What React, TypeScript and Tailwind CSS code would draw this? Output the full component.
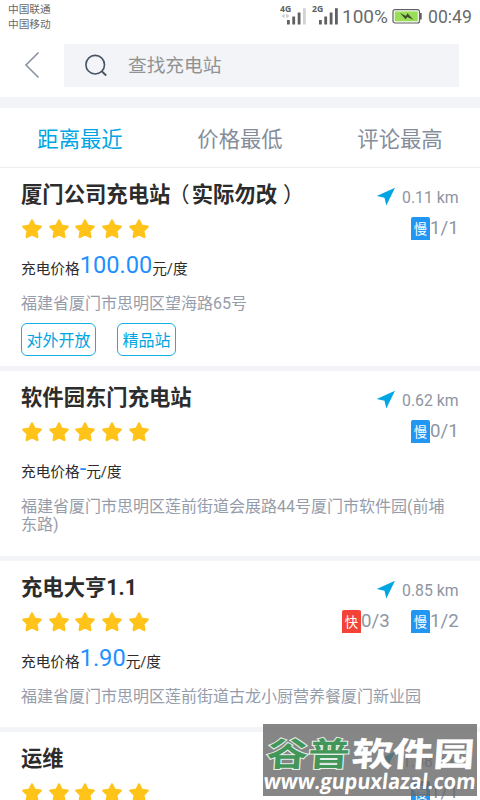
type Charger = { kind: 'fast' | 'slow'; count: string };
type Station = {
  name: string;
  note?: string;
  distance: string;
  chargers: Charger[];
  price?: string;
  address?: string;
  tags: string[];
  size: string;
};

const stations: Station[] = [
  {
    name: '厦门公司充电站',
    note: '实际勿改',
    distance: '0.11 km',
    chargers: [{ kind: 'slow', count: '1/1' }],
    price: '100.00',
    address: '福建省厦门市思明区望海路65号',
    tags: ['对外开放', '精品站'],
    size: 'h-[203px]',
  },
  {
    name: '软件园东门充电站',
    distance: '0.62 km',
    chargers: [{ kind: 'slow', count: '0/1' }],
    price: '-',
    address: '福建省厦门市思明区莲前街道会展路44号厦门市软件园(前埔东路)',
    tags: [],
    size: 'h-[190px]',
  },
  {
    name: '充电大亨1.1',
    distance: '0.85 km',
    chargers: [
      { kind: 'fast', count: '0/3' },
      { kind: 'slow', count: '1/2' },
    ],
    price: '1.90',
    address: '福建省厦门市思明区莲前街道古龙小厨营养餐厦门新业园',
    tags: [],
    size: 'h-[171px]',
  },
  {
    name: '运维',
    distance: '1.08 km',
    chargers: [{ kind: 'slow', count: '1/1' }],
    tags: [],
    size: 'h-[171px]',
  },
];

function Star() {
  return (
    <svg className="h-5 w-5 shrink-0" viewBox="0 0 20 20">
      <path
        d="M10 1.5 L12.5 6.7 L18.6 7.6 L14.3 11.9 L15.3 18 L10 15.2 L4.7 18 L5.7 11.9 L1.4 7.6 L7.5 6.7 Z"
        fill="#ffc31a"
        stroke="#ffc31a"
        strokeWidth="2.4"
        strokeLinejoin="round"
      />
    </svg>
  );
}

function Signal({ label, dim, data }: { label: string; dim?: boolean; data?: boolean }) {
  return (
    <svg className="h-5 w-[28px] shrink-0 overflow-visible" viewBox="0 0 28 20">
      <text x="0" y="7" fontSize="8.6" fontWeight="700" fill="#606060" className="font-['Noto_Sans',sans-serif]">
        {label}
      </text>
      {data && <path d="M1.5 11 L4.5 8.8 V13.2 Z M9.5 11 L6.2 8.8 V13.2 Z" fill="#c9c9c9" />}
      <path d="M7 15h2.8v4.5H7z M12.3 11.5h2.8v8h-2.8z M17.7 7.5h2.8v12h-2.8z" fill="#606060" />
      <path d="M23 3.2h2.8v16.3H23z" fill={dim ? '#d2d2d2' : '#606060'} />
    </svg>
  );
}

function StatusBar() {
  return (
    <div className="flex h-9 shrink-0 justify-between pl-2 pr-[8px] text-[#6a6a6a]">
      <div className="pt-[2px] text-[10.67px] leading-[15px]">
        <div>中国联通</div>
        <div>中国移动</div>
      </div>
      <div className="flex items-start pt-[5px]">
        <Signal label="4G" dim data />
        <div className="w-1" />
        <Signal label="2G" />
        <span className="ml-[2px] w-[50px] whitespace-nowrap text-[19px] leading-6">100%</span>
        <svg className="mt-[3px] h-[17px] w-[30px] shrink-0" viewBox="0 0 30 17">
          <rect x="1" y="1.7" width="26.5" height="13.3" rx="2" fill="#fff" stroke="#606060" strokeWidth="1.2" />
          <rect x="2.7" y="3.4" width="23.1" height="9.9" fill="#9ade58" />
          <path d="M28 5h1.7v6.5H28z" fill="#606060" />
          <path d="M8 5 L14 8 L15.4 5.2 L21.5 11.8 L15.2 9 L13.6 11.2 Z" fill="#3d4a35" />
        </svg>
        <span className="ml-[6px] w-[44px] whitespace-nowrap text-[17.6px] leading-6">00:49</span>
      </div>
    </div>
  );
}

function StationCard({ station }: { station: Station }) {
  return (
    <section className={`shrink-0 border-b-[5px] border-[#f2f4f7] pl-[21px] pr-[21px] pt-[12px] ${station.size}`}>
      <div className="flex h-[30px] justify-between">
        <h2 className="whitespace-nowrap text-[21.33px] font-bold leading-[30px] text-[#2c2c2c]">
          {station.name}
          {station.note && (
            <>
              <span className="-ml-[2px] mr-[2px] font-normal">（</span>
              {station.note}
              <span className="ml-[6px] -mr-[6px] font-normal">）</span>
            </>
          )}
        </h2>
        <div className="flex text-[15.8px] text-[#8d95a3]">
          <svg className="mr-[6px] mt-[7px] h-5 w-5" viewBox="0 0 20 20">
            <path d="M19 0.7 L0.7 9 L8.5 10.7 L10.3 18.5 Z" fill="#00a5e3" />
          </svg>
          <span className="w-[57px] whitespace-nowrap pt-[6px] leading-[24px]">{station.distance}</span>
        </div>
      </div>
      <div className="flex h-[38px] justify-between">
        <div className="ml-[1px] flex gap-[6.67px] pt-[9px]">
          {[0, 1, 2, 3, 4].map((n) => (
            <Star key={n} />
          ))}
        </div>
        <div className="-mr-[1px] flex gap-[20px] pt-[7px]">
          {station.chargers.map((c) => (
            <div key={c.kind} className="flex w-[49px]">
              <span
                className={`h-[23px] w-[19px] shrink-0 rounded-t-[2px] pt-[3px] text-center text-[13.3px] leading-5 text-white ${
                  c.kind === 'fast' ? 'bg-[#f44336]' : 'bg-[#2196f3]'
                }`}
              >
                {c.kind === 'fast' ? '快' : '慢'}
              </span>
              <span className="whitespace-nowrap text-[18.67px] leading-[23px] text-[#8d95a3]">{c.count}</span>
            </div>
          ))}
        </div>
      </div>
      {station.price && (
        <div className="flex h-[47px] items-baseline whitespace-nowrap pt-[1px] text-[14.67px] text-[#2c2c2c]">
          <span className="translate-y-px">充电价格</span>
          <span className="text-[23.6px] leading-[32px] text-[#1e90ff]">{station.price}</span>
          <span className="translate-y-px">元/度</span>
        </div>
      )}
      {station.address && (
        <p className="w-[432px] text-[16px] leading-[18px] text-[#969daa]">{station.address}</p>
      )}
      {station.tags.length > 0 && (
        <div className="mt-[10px] flex gap-[21px]">
          {station.tags.map((t) => (
            <span
              key={t}
              className="h-[33px] rounded-[6px] border-[1.5px] border-[#16aee5] px-[4.5px] text-[16px] leading-[33px] text-[#00a5e3]"
            >
              {t}
            </span>
          ))}
        </div>
      )}
    </section>
  );
}

function Watermark() {
  return (
    <div className="absolute left-[263px] top-[724px] h-[72px] w-[214px] bg-[#686868]/80">
      <svg className="h-full w-full overflow-visible" viewBox="0 0 214 72">
        <g transform="translate(3 41.5) skewX(-4) scale(1.2 1)" className="font-['Noto_Sans_CJK_SC',sans-serif]" fontWeight="700" fontSize="33">
          <text x="0" y="0" fill="#43965a" stroke="#e5eee7" strokeWidth="2" paintOrder="stroke" textLength="69" lengthAdjust="spacingAndGlyphs">谷普</text>
          <text x="71" y="0" fill="#fff" stroke="#fff" strokeWidth="0.5" textLength="102" lengthAdjust="spacingAndGlyphs">软件园</text>
        </g>
        <g transform="translate(0 65) skewX(-6)">
          <text x="0" y="0" textLength="212" lengthAdjust="spacingAndGlyphs" fontSize="21.5" fontWeight="700" fill="#fff" className="font-['Open_Sans',sans-serif]">
            www.gupuxlazal.com
          </text>
        </g>
      </svg>
    </div>
  );
}

export default function App() {
  return (
    <main className="relative flex h-[800px] w-[480px] flex-col overflow-hidden bg-white font-['Roboto','Noto_Sans_CJK_SC',sans-serif]">
      <StatusBar />
      <header className="flex h-[61px] shrink-0 pt-2">
        <svg className="ml-[24px] mt-[7px] h-7 w-4 shrink-0" viewBox="0 0 16 28">
          <path d="M14.5 1.5 L2 14 L14.5 26.5" fill="none" stroke="#8993a1" strokeWidth="1.6" />
        </svg>
        <div className="ml-[24px] flex h-[43px] w-[395px] bg-[#f2f4f7]">
          <svg className="ml-[20px] mt-[10px] h-6 w-6" viewBox="0 0 24 24">
            <circle cx="11.2" cy="10.7" r="9.3" fill="none" stroke="#465365" strokeWidth="1.6" />
            <path d="M17.5 17 L22.2 21.5" stroke="#465365" strokeWidth="1.8" />
          </svg>
          <span className="ml-[20px] text-[18.67px] leading-[45px] text-[#929292]">查找充电站</span>
        </div>
      </header>
      <div className="h-[11px] shrink-0 bg-[#f2f4f7]" />
      <nav className="grid h-[60px] shrink-0 grid-cols-3 border-b border-[#eceef0] text-center text-[21.33px] leading-[64px] text-[#858d9b]">
        <span className="text-[#00a5e3]">距离最近</span>
        <span>价格最低</span>
        <span>评论最高</span>
      </nav>
      {stations.map((s) => (
        <StationCard key={s.name} station={s} />
      ))}
      <Watermark />
    </main>
  );
}
